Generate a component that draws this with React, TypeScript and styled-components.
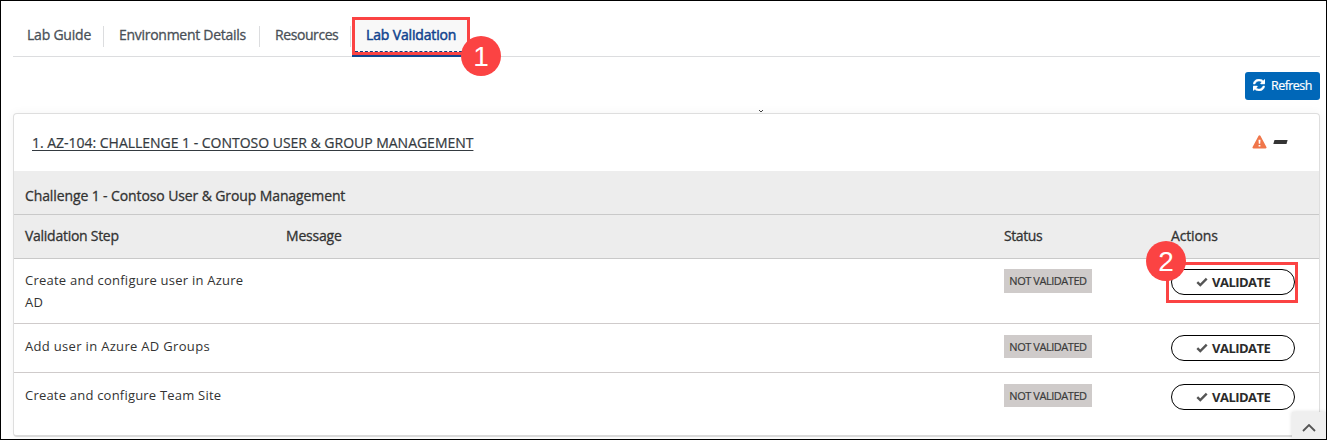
import React from 'react';
import styled, { createGlobalStyle } from 'styled-components';

const GlobalStyle = createGlobalStyle`
  *, *::before, *::after { box-sizing: border-box; }
  body {
    margin: 0;
    background: #fff;
    font-family: 'Open Sans', 'Noto Sans', sans-serif;
    font-size: 14px;
    color: #333;
  }
`;

const Frame = styled.div`
  position: relative;
  height: 440px;
  padding: 16px 6px 0 12px;
  border: 1px solid #000;
  overflow: hidden;
`;

const Label = styled.span<{ $ls?: number; $size?: number; $bold?: number }>`
  letter-spacing: ${(p) => p.$ls ?? 0}px;
  font-size: ${(p) => p.$size ?? 14}px;
  -webkit-text-stroke: ${(p) => p.$bold ?? 0}px currentColor;
  white-space: nowrap;
`;

const TabBar = styled.nav`
  display: flex;
  height: 40px;
  border-bottom: 1px solid #dcdddf;
`;

const Tab = styled.div<{ $width: number; $pad: number }>`
  position: relative;
  width: ${(p) => p.$width}px;
  height: 37px;
  padding-left: ${(p) => p.$pad}px;
  line-height: 36px;
  color: #495057;
  &::after {
    content: '';
    position: absolute;
    right: 0;
    top: 9px;
    width: 1px;
    height: 21px;
    background: #dcdddf;
  }
`;

const ActiveTab = styled.div`
  position: relative;
  width: 118px;
  height: 40px;
  margin-left: 1px;
  padding-left: 14px;
  line-height: 36px;
  color: #11448f;
  background: #f8f8f8;
  border-bottom: 2px solid #11448f;
`;

const DottedLine = styled.span`
  position: absolute;
  left: 3px;
  right: 3px;
  top: 34px;
  border-top: 1px dashed #123a7c;
`;

const Highlight = styled.span<{ $top: number; $left: number; $w: number; $h: number }>`
  position: absolute;
  top: ${(p) => p.$top}px;
  left: ${(p) => p.$left}px;
  width: ${(p) => p.$w}px;
  height: ${(p) => p.$h}px;
  border: 3px solid #fb4343;
`;

const Step = styled.span<{ $top: number; $left: number }>`
  position: absolute;
  top: ${(p) => p.$top}px;
  left: ${(p) => p.$left}px;
  z-index: 2;
  width: 40px;
  height: 40px;
  border-radius: 50%;
  background: #fb4343;
  color: #fff;
  font: 400 28px/41px 'Liberation Sans', Arial, sans-serif;
  text-align: center;
`;

const Toolbar = styled.div`
  display: flex;
  justify-content: flex-end;
  margin-top: 15px;
`;

const RefreshButton = styled.button`
  display: flex;
  align-items: center;
  gap: 6px;
  width: 75px;
  height: 28px;
  padding: 0 0 2px 8px;
  border: 0;
  border-radius: 3px;
  background: #0067b8;
  color: #fff;
  font-family: inherit;
`;

const Caret = styled.svg`
  display: block;
  margin: 10px 0 1px 746px;
`;

const Card = styled.section`
  height: 324px;
  border: 1px solid #dedede;
  border-bottom: 2px solid #dadada;
  border-radius: 4px;
  box-shadow: 0 0 10px rgba(0, 0, 0, 0.05);
`;

const CardHeader = styled.header`
  display: flex;
  align-items: center;
  height: 57px;
  padding: 0 31px 0 18px;
  color: #343a40;
`;

const Title = styled(Label)`
  flex: 1;
  span {
    text-decoration: underline;
    text-decoration-thickness: 1px;
    text-underline-offset: 2px;
  }
`;

const HeaderIcons = styled.div`
  display: flex;
  align-items: center;
  gap: 6px;
  padding-bottom: 1px;
`;

const Caption = styled.div`
  height: 44px;
  padding-left: 11px;
  line-height: 50px;
  background: #ededed;
  border-bottom: 1px solid #c9c9c9;
`;

const Row = styled.div<{ $height: number; $top: number; $last?: boolean }>`
  display: grid;
  grid-template-columns: 261px 718px 167px 1fr;
  align-items: start;
  height: ${(p) => p.$height}px;
  padding: ${(p) => p.$top}px 0 0 11px;
  border-bottom: ${(p) => (p.$last ? '0' : '1px solid #cfcbcb')};
  line-height: 22px;
`;

const HeadRow = styled(Row)`
  background: #ededed;
  border-bottom-color: #c9c9c9;
`;

const Badge = styled.span<{ $height: number }>`
  width: 88px;
  height: ${(p) => p.$height}px;
  background: #cfcbca;
  text-align: center;
  line-height: ${(p) => p.$height - 2}px;
  color: #3a3a3a;
`;

const Action = styled.div`
  position: relative;
`;

const ValidateButton = styled.button`
  display: flex;
  align-items: center;
  gap: 4px;
  width: 124px;
  height: 26px;
  padding: 0 0 1px 24px;
  border: 1px solid #000;
  border-radius: 13px;
  background: #fff;
  color: #2b2b2b;
  font-family: inherit;
  font-weight: 700;
`;

const ScrollTop = styled.button`
  position: absolute;
  right: 0;
  bottom: 0;
  display: flex;
  align-items: center;
  justify-content: center;
  width: 34px;
  height: 27px;
  padding: 5px 0 0;
  border: 0;
  background: #efefef;
  box-shadow: 0 0 4px rgba(0, 0, 0, 0.15);
`;

const tabs = [
  { name: 'Lab Guide', width: 91, pad: 14, ls: -0.22 },
  { name: 'Environment Details', width: 156, pad: 15, ls: -0.28 },
  { name: 'Resources', width: 91, pad: 15, ls: -0.42 },
];

const rows = [
  {
    lines: [{ t: 'Create and configure user in Azure', ls: 0.24 }, { t: 'AD', ls: 0.3 }],
    height: 65,
    top: 10,
    badge: 24,
  },
  { lines: [{ t: 'Add user in Azure AD Groups', ls: 0.32 }], height: 49, top: 11, badge: 23 },
  { lines: [{ t: 'Create and configure Team Site', ls: 0.21 }], height: 62, top: 11, badge: 23 },
];

const RefreshIcon = () => (
  <svg width="12" height="12" viewBox="0 0 1536 1536" fill="currentColor" stroke="currentColor" strokeWidth="60">
    <path d="M1511 928q0 5-1 7-64 268-268 434.500T764 1536q-146 0-282.500-55T238 1324l-129 129q-19 19-45 19t-45-19-19-45V960q0-26 19-45t45-19h448q26 0 45 19t19 45-19 45l-137 137q71 66 161 102t187 36q134 0 250-65t186-179q11-17 53-117 8-23 30-23h192q13 0 22.500 9.500t9.500 22.500zm25-800v448q0 26-19 45t-45 19h-448q-26 0-45-19t-19-45 19-45l138-138Q969 256 768 256q-134 0-250 65T332 500q-11 17-53 117-8 23-30 23H50q-13 0-22.500-9.500T18 608v-7q65-268 270-434.500T768 0q146 0 284 55.500T1297 212l130-129q19-19 45-19t45 19 19 45z" />
  </svg>
);

const WarningIcon = () => (
  <svg width="15" height="14" viewBox="0 0 15 14">
    <path d="M7.500 0.300c.4 0 .7.200.9.500l6 11.100c.4.700 0 1.500-.9 1.500h-12c-.9 0-1.300-.8-.9-1.500l6-11.100c.2-.3.500-.5.9-.5z" fill="#f0764a" />
    <path d="M6.500 4.800h2l-.3 4h-1.400zM6.600 9.900h1.800v1.700h-1.800z" fill="#fff" />
  </svg>
);

const MinusIcon = () => (
  <svg width="15" height="4" viewBox="0 0 15 4">
    <path d="M1.500 0H14.600L13.500 4H.3z" fill="#343434" />
  </svg>
);

const CheckIcon = () => (
  <svg width="12" height="10" viewBox="0 0 12 10">
    <path d="M1.300 5.100L4.300 8L10.700 1.600" fill="none" stroke="#555" strokeWidth="2.400" />
  </svg>
);

export default function App() {
  return (
    <Frame>
      <GlobalStyle />
      <TabBar>
        {tabs.map((t) => (
          <Tab key={t.name} $width={t.width} $pad={t.pad}>
            <Label $ls={t.ls} $bold={0.3}>{t.name}</Label>
          </Tab>
        ))}
        <ActiveTab>
          <Label $ls={-0.15} $bold={0.5}>Lab Validation</Label>
          <DottedLine />
          <Highlight $top={0} $left={0} $w={118} $h={38} />
          <Step $top={19} $left={109}>1</Step>
        </ActiveTab>
      </TabBar>
      <Toolbar>
        <RefreshButton>
          <RefreshIcon />
          <Label $size={12.5} $ls={-0.55} $bold={0.2}>Refresh</Label>
        </RefreshButton>
      </Toolbar>
      <Caret width="4" height="2" viewBox="0 0 4 2">
        <path d="M0 0h1v1H0zM3 0h1v1H3zM1 1h2v1H1z" fill="#444" />
      </Caret>
      <Card>
        <CardHeader>
          <Title $ls={-0.02} $bold={0.2}>
            <span>1. AZ-104: CHALLENGE 1 - CONTOSO USER &amp; GROUP MANAGEMENT</span>
          </Title>
          <HeaderIcons>
            <WarningIcon />
            <MinusIcon />
          </HeaderIcons>
        </CardHeader>
        <Caption>
          <Label $ls={-0.11} $bold={0.3}>Challenge 1 - Contoso User &amp; Group Management</Label>
        </Caption>
        <HeadRow $height={44} $top={10}>
          <Label $ls={-0.27} $bold={0.3}>Validation Step</Label>
          <Label $ls={-0.2} $bold={0.3}>Message</Label>
          <Label $ls={-0.4} $bold={0.3}>Status</Label>
          <Label $ls={-0.15} $bold={0.3}>Actions</Label>
        </HeadRow>
        {rows.map((r, i) => (
          <Row key={r.lines[0].t} $height={r.height} $top={r.top} $last={i === rows.length - 1}>
            <div>
              {r.lines.map((l) => (
                <div key={l.t}>
                  <Label $ls={l.ls} $size={13}>{l.t}</Label>
                </div>
              ))}
            </div>
            <span />
            <Badge $height={r.badge}>
              <Label $size={11} $ls={-0.45} $bold={0.2}>NOT VALIDATED</Label>
            </Badge>
            <Action>
              <ValidateButton>
                <CheckIcon />
                <Label $size={13} $ls={-0.52}>VALIDATE</Label>
              </ValidateButton>
              {i === 0 && (
                <>
                  <Highlight $top={-7} $left={-5} $w={132} $h={41} />
                  <Step $top={-28} $left={-25}>2</Step>
                </>
              )}
            </Action>
          </Row>
        ))}
      </Card>
      <ScrollTop>
        <svg width="14" height="8" viewBox="0 0 14 8">
          <path d="M1 7L7 1L13 7" fill="none" stroke="#555" strokeWidth="1.800" />
        </svg>
      </ScrollTop>
    </Frame>
  );
}
